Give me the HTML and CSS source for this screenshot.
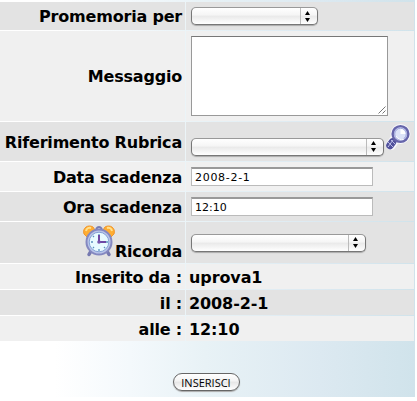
FILE: index.html
```
<!DOCTYPE html>
<html lang="it">
<head>
    <meta charset="UTF-8">
    <meta name="viewport" content="width=device-width, initial-scale=1.0">
    <title>Promemoria</title>
    <link rel="stylesheet" href="styles.css">
</head>
<body>
    <form class="reminder">
        <div class="row row-to dark">
            <label class="label"><span>Promemoria per</span></label>
            <div class="field">
                <div class="select select-small"><svg class="arrows" viewBox="0 0 5 11"><path d="M0 4L2.5 0L5 4ZM0 7H5L2.5 11Z"/></svg></div>
            </div>
        </div>
        <div class="row row-message">
            <label class="label"><span>Messaggio</span></label>
            <div class="field">
                <div class="textarea"><svg class="grip" viewBox="0 0 8 8"><path d="M0.5 7.5L7.5 0.5M4.5 7.5L7.5 4.5"/></svg></div>
            </div>
        </div>
        <div class="row row-contact dark">
            <label class="label"><span>Riferimento Rubrica</span></label>
            <div class="field">
                <div class="select select-large"><svg class="arrows" viewBox="0 0 5 11"><path d="M0 4L2.5 0L5 4ZM0 7H5L2.5 11Z"/></svg></div>
                <svg class="search" viewBox="0 0 26 28">
                    <path d="M10 15L6 21" stroke="#f8f8fc" stroke-width="10" stroke-linecap="round"/>
                    <circle cx="15.5" cy="10" r="10" fill="#f8f8fc"/>
                    <path d="M11 15L8 18" stroke="#6968b0" stroke-width="3"/>
                    <path d="M7.5 18L5 21.5" stroke="#51519c" stroke-width="7.5" stroke-linecap="round"/>
                    <path d="M3 18l5 5M6 16l4 4M3 22l1 1M8 16l-5 7" stroke="#b9bae5" stroke-width="1"/>
                    <circle cx="15.5" cy="10" r="7.9" fill="#cfd4f3" stroke="#6665aa" stroke-width="2.4"/>
                    <circle cx="15.5" cy="10" r="5.8" fill="#dce3f8" stroke="#9ba2da"/>
                    <path d="M15.5 5v5h5a5 5 0 0 0-5-5" fill="#fff"/>
                    <path d="M11 12a6 6 0 0 0 8 3" fill="none" stroke="#fff" stroke-width="1"/>
                </svg>
            </div>
        </div>
        <div class="row row-date">
            <label class="label" for="date"><span>Data scadenza</span></label>
            <div class="field"><input class="input input-date" id="date" type="text" value="2008-2-1"></div>
        </div>
        <div class="row row-time dark">
            <label class="label" for="time"><span>Ora scadenza</span></label>
            <div class="field"><input class="input" id="time" type="text" value="12:10"></div>
        </div>
        <div class="row row-alarm dark">
            <div class="label">
                <svg class="clock" viewBox="0 0 32 32">
                    <path d="M8 26L6 29.5M24 26L26 29.5" stroke="#7679b0" stroke-width="3.5" stroke-linecap="round"/>
                    <path d="M1 9C-1 3 5-1 10 2L12 5L4 12Z" fill="#ffad32" stroke="#f0952c"/>
                    <path d="M31 9C33 3 27-1 22 2L20 5L28 12Z" fill="#ffad32" stroke="#f0952c"/>
                    <path d="M3 6Q4 2 8 3M24 3Q28 2 29 6" fill="none" stroke="#ffe08d" stroke-width="2"/>
                    <path d="M13 4Q16 0 19 4" fill="none" stroke="#777bb2" stroke-width="2"/>
                    <circle cx="16" cy="17" r="12.5" fill="#b9c4e9" stroke="#8488c0" stroke-width="2"/>
                    <circle cx="16" cy="17" r="9.8" fill="#e8faff" stroke="#86a2d6"/>
                    <path d="M16 9v1M16 24v2M8 17h2M23 17h2M10 11l1 1M21 22l1 1M10 23l1-1" stroke="#5b91bf" stroke-width="1.3"/>
                    <path d="M16 10V17H23" fill="none" stroke="#6d47a4" stroke-width="2"/>
                    <circle cx="16" cy="17" r="1.8" fill="#7554ac"/>
                </svg>
                <span>Ricorda</span>
            </div>
            <div class="field">
                <div class="select select-medium"><svg class="arrows" viewBox="0 0 5 11"><path d="M0 4L2.5 0L5 4ZM0 7H5L2.5 11Z"/></svg></div>
            </div>
        </div>
        <div class="row row-info">
            <div class="label"><span>Inserito da :</span></div>
            <div class="field"><span>uprova1</span></div>
        </div>
        <div class="row row-info dark">
            <div class="label"><span>il :</span></div>
            <div class="field"><span>2008-2-1</span></div>
        </div>
        <div class="row row-info">
            <div class="label"><span>alle :</span></div>
            <div class="field"><span>12:10</span></div>
        </div>
        <div class="actions">
            <button class="btn" type="button">INSERISCI</button>
        </div>
    </form>
</body>
</html>
```

FILE: styles.css
```
* {
    margin: 0;
    padding: 0;
    box-sizing: border-box;
}

body {
    background: #fff;
    color: #000;
    font: bold 16px/20px "DejaVu Sans", Verdana, sans-serif;
}

.reminder {
    width: 415px;
    height: 397px;
    padding-top: 2px;
    display: flex;
    flex-direction: column;
    gap: 1px;
    background: linear-gradient(to right, #fff 55px, #f4f9fc 130px, #e8f2f6 205px, #dce9f1 320px, #d0e3eb 415px);
}

/* Rows */
.row {
    display: grid;
    grid-template-columns: 185px 228px;
    column-gap: 1px;
    flex: none;
}

.label,
.field {
    display: flex;
    align-items: center;
    background: #f0f0f0;
    white-space: nowrap;
}

.label {
    justify-content: flex-end;
    padding: 2px 3px 0 0;
    letter-spacing: -0.2px;
}

.field {
    padding-left: 5px;
}

.dark .label,
.dark .field {
    background: #e3e3e3;
}

.row-to {
    height: 28px;
}

.row-message {
    height: 90px;
}

.row-contact {
    height: 39px;
}

.row-date,
.row-time {
    height: 29px;
}

.row-alarm {
    height: 41px;
}

.row-info {
    height: 25px;
}

.row-info .field {
    padding: 2px 0 0 3px;
    letter-spacing: -0.1px;
}

/* Controls */
.select {
    height: 18px;
    display: flex;
    align-items: center;
    justify-content: flex-end;
    padding-right: 7px;
    border: 1px solid #777;
    border-top-color: #999;
    border-radius: 5px;
    background:
        linear-gradient(#bbb, #bbb) right 16px top / 1px 100% no-repeat,
        linear-gradient(#fff, #f5f5f5 45%, #e9e9e9 50%, #fff);
    box-shadow: 0 1px 1px #aaa;
}

.select-small {
    width: 127px;
}

.select-large {
    width: 193px;
    margin-top: 10px;
}

.select-medium {
    width: 175px;
}

.arrows {
    width: 5px;
    height: 11px;
}

.textarea {
    width: 197px;
    height: 80px;
    display: flex;
    align-items: flex-end;
    justify-content: flex-end;
    padding: 1px;
    border: 1px solid #999;
    border-top-color: #777;
    background: #fff;
}

.grip {
    width: 8px;
    height: 8px;
    fill: none;
    stroke: #555;
    stroke-width: 0.8;
}

.input {
    width: 182px;
    height: 19px;
    padding: 1px 3px;
    border: 1px solid #bbb;
    border-top: 2px solid #999;
    background: #fff;
    color: #000;
    font: 11px/14px "DejaVu Sans", Verdana, sans-serif;
}

.input-date {
    letter-spacing: 0.7px;
}

/* Icons */
.search {
    width: 26px;
    height: 28px;
    margin: -8px 0 0 1px;
}

.clock {
    width: 32px;
    height: 32px;
    margin-top: -5px;
}

.row-alarm .label span {
    margin-top: 16px;
}

/* Submit */
.actions {
    display: flex;
    justify-content: center;
    padding: 31px 3px 0 0;
}

.btn {
    width: 67px;
    height: 18px;
    border: 1px solid #666;
    border-radius: 9px;
    background: linear-gradient(#fff, #f3f3f3 45%, #e6e6e6 50%, #fff);
    box-shadow: 0 1px 1px #aaa;
    color: #000;
    font: 11px/15px "Open Sans", sans-serif;
}
```
